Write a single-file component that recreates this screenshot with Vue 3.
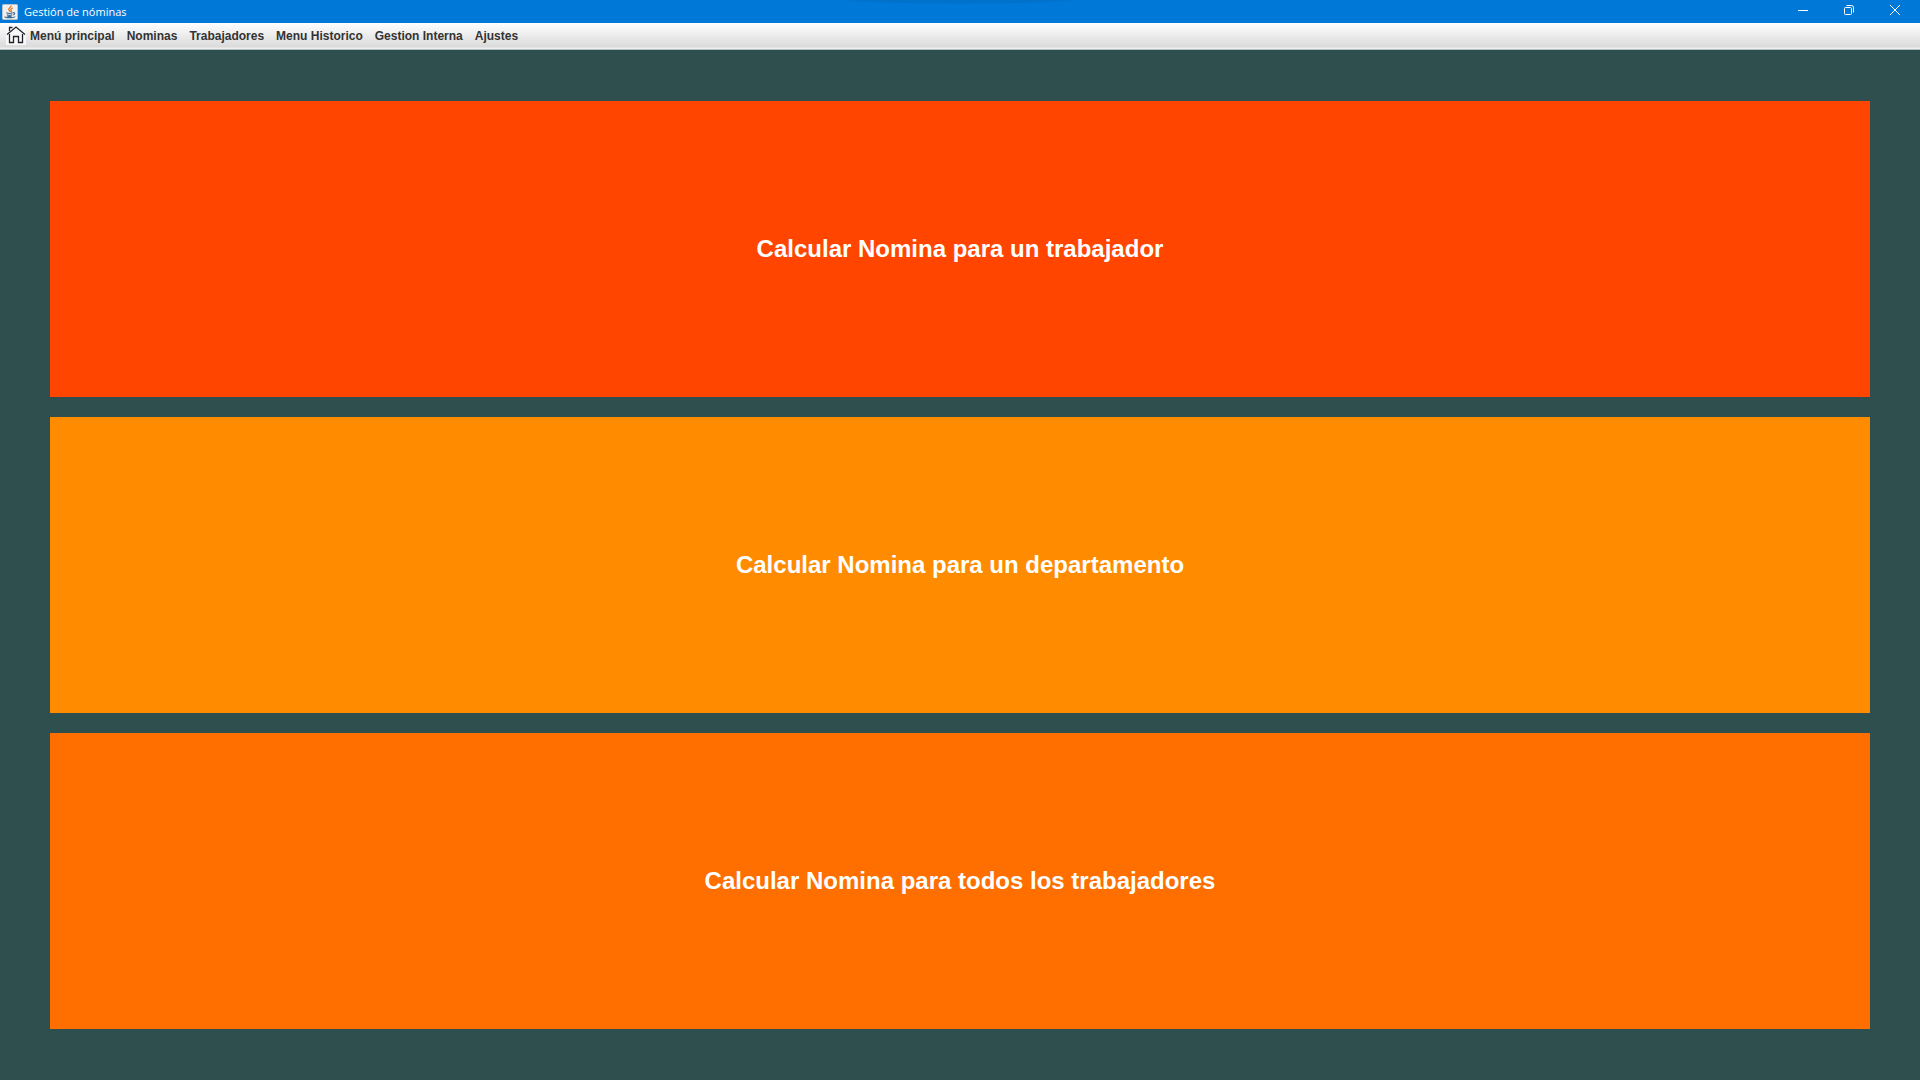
<script setup>
const menus = ['Nominas', 'Trabajadores', 'Menu Historico', 'Gestion Interna', 'Ajustes']
const actions = [
  { label: 'Calcular Nomina para un trabajador', tone: 'red' },
  { label: 'Calcular Nomina para un departamento', tone: 'amber' },
  { label: 'Calcular Nomina para todos los trabajadores', tone: 'orange' },
]
</script>

<template>
  <div class="window">
    <header class="titlebar">
      <svg class="app-icon" viewBox="0 0 16 16" aria-hidden="true">
        <rect x="0.5" y="0.5" width="15" height="15" rx="1" fill="#eef0f1" stroke="#b9c4cc" />
        <path d="M9 1.500c.8 1.800-3 2.600-2.200 4.300.3.700 1.200 1.200 1.200 2.200M10.800 4c-1.700.7-2.500 1.600-1.600 2.600.5.600.3 1.200-.3 1.600" fill="none" stroke="#e8781c" stroke-width="1.300" />
        <path d="M4.300 8.800c1.500.8 4.900.8 6.400 0M4.800 10.700c1.500.7 4 .7 5.400 0M11 8.700c2.200-.4 2.200 1.700.1 2.300M2.800 12.600c-.4 1.400 9.400 1.400 10.200-.2M5.300 12.200c1.300.4 3.200.4 4.400 0" fill="none" stroke="#3f6a93" stroke-width="1.100" />
      </svg>
      <span class="title">Gestión de nóminas</span>
      <div class="controls">
        <button type="button" aria-label="Minimizar">
          <svg viewBox="0 0 12 12"><path d="M1 6.500h10" /></svg>
        </button>
        <button type="button" aria-label="Restaurar">
          <svg viewBox="0 0 12 12"><rect x="1.500" y="3.500" width="7" height="7" rx="1" /><path d="M3.500 1.500h5a2 2 0 0 1 2 2v5" /></svg>
        </button>
        <button type="button" aria-label="Cerrar">
          <svg viewBox="0 0 12 12"><path d="M1 1l10 10M11 1L1 11" /></svg>
        </button>
      </div>
    </header>

    <nav class="menubar">
      <button type="button" class="menu home">
        <svg class="home-icon" viewBox="0 0 20 20" aria-hidden="true">
          <rect width="20" height="20" fill="#f8f8f8" />
          <path d="M1 9.500L10 2l9 7.500M3.500 9v8.500h4v-6h5v6h4V9M3.500 6V2.500h3" fill="none" stroke="#20242c" stroke-width="1.300" />
        </svg>
        <span>Menú principal</span>
      </button>
      <button v-for="menu in menus" :key="menu" type="button" class="menu">{{ menu }}</button>
    </nav>

    <main class="actions">
      <button v-for="action in actions" :key="action.label" type="button" class="action" :class="action.tone">
        {{ action.label }}
      </button>
    </main>
  </div>
</template>

<style>
body {
  margin: 0;
}
</style>

<style scoped>
.window {
  display: flex;
  flex-direction: column;
  min-height: 100vh;
  background: #2f4f4f;
  font-family: "Liberation Sans", Arial, sans-serif;
}

button {
  margin: 0;
  padding: 0;
  border: 0;
  background: none;
  font-family: inherit;
}

.titlebar {
  display: flex;
  align-items: center;
  height: 23px;
  padding: 0 2px;
  background: radial-gradient(ellipse 120px 4px at 50% 0, #0072cc 80%, #0078d7 100%);
  color: #fff;
}

.app-icon {
  width: 16px;
  height: 16px;
}

.title {
  margin-left: 6px;
  font-family: "Open Sans", "Noto Sans", sans-serif;
  font-size: 11px;
  line-height: 16px;
}

.controls {
  display: flex;
  align-self: stretch;
  margin-left: auto;
}

.controls button {
  display: flex;
  justify-content: center;
  width: 46px;
  padding-top: 4px;
}

.controls svg {
  width: 12px;
  height: 12px;
  fill: none;
  stroke: #fff;
  stroke-width: 1;
}

.menubar {
  display: flex;
  align-items: center;
  gap: 12px;
  box-sizing: border-box;
  height: 27px;
  padding: 0 6px;
  border-bottom: 1px solid #b4c0c0;
  background: linear-gradient(#fff, #dadada 24px, #eee 25px);
}

.menu {
  color: #333;
  font-size: 12px;
  font-weight: bold;
  line-height: 16px;
  white-space: nowrap;
}

.home {
  display: flex;
  align-items: center;
  gap: 4px;
}

.home-icon {
  width: 20px;
  height: 20px;
  margin-bottom: 2px;
}

.actions {
  display: flex;
  flex: 1;
  flex-direction: column;
  gap: 20px;
  padding: 51px 50px;
}

.action {
  flex: 1;
  color: #fff;
  font-size: 24px;
  font-weight: bold;
  line-height: 28px;
}

.red {
  background: #ff4500;
}

.amber {
  background: #ff8c00;
}

.orange {
  background: #ff6f00;
}
</style>
